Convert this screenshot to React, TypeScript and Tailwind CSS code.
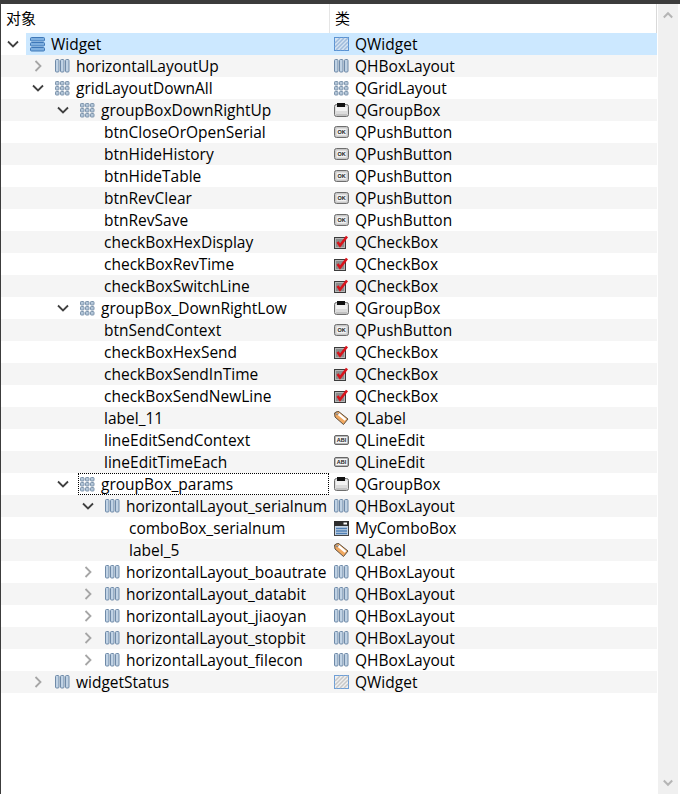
import { ReactNode } from "react";

type IconName = "vbox" | "widget" | "hbox" | "grid" | "group" | "push" | "check" | "label" | "line" | "combo" | "widgetGray";

type Row = {
  name: string;
  cls: string;
  clsIcon: IconName;
  depth: number;
  icon?: IconName;
  open?: boolean;
  focus?: boolean;
  selected?: boolean;
};

const rows: Row[] = [
  { name: "Widget", cls: "QWidget", clsIcon: "widget", depth: 0, icon: "vbox", open: true, selected: true },
  { name: "horizontalLayoutUp", cls: "QHBoxLayout", clsIcon: "hbox", depth: 1, icon: "hbox", open: false },
  { name: "gridLayoutDownAll", cls: "QGridLayout", clsIcon: "grid", depth: 1, icon: "grid", open: true },
  { name: "groupBoxDownRightUp", cls: "QGroupBox", clsIcon: "group", depth: 2, icon: "grid", open: true },
  { name: "btnCloseOrOpenSerial", cls: "QPushButton", clsIcon: "push", depth: 3 },
  { name: "btnHideHistory", cls: "QPushButton", clsIcon: "push", depth: 3 },
  { name: "btnHideTable", cls: "QPushButton", clsIcon: "push", depth: 3 },
  { name: "btnRevClear", cls: "QPushButton", clsIcon: "push", depth: 3 },
  { name: "btnRevSave", cls: "QPushButton", clsIcon: "push", depth: 3 },
  { name: "checkBoxHexDisplay", cls: "QCheckBox", clsIcon: "check", depth: 3 },
  { name: "checkBoxRevTime", cls: "QCheckBox", clsIcon: "check", depth: 3 },
  { name: "checkBoxSwitchLine", cls: "QCheckBox", clsIcon: "check", depth: 3 },
  { name: "groupBox_DownRightLow", cls: "QGroupBox", clsIcon: "group", depth: 2, icon: "grid", open: true },
  { name: "btnSendContext", cls: "QPushButton", clsIcon: "push", depth: 3 },
  { name: "checkBoxHexSend", cls: "QCheckBox", clsIcon: "check", depth: 3 },
  { name: "checkBoxSendInTime", cls: "QCheckBox", clsIcon: "check", depth: 3 },
  { name: "checkBoxSendNewLine", cls: "QCheckBox", clsIcon: "check", depth: 3 },
  { name: "label_11", cls: "QLabel", clsIcon: "label", depth: 3 },
  { name: "lineEditSendContext", cls: "QLineEdit", clsIcon: "line", depth: 3 },
  { name: "lineEditTimeEach", cls: "QLineEdit", clsIcon: "line", depth: 3 },
  { name: "groupBox_params", cls: "QGroupBox", clsIcon: "group", depth: 2, icon: "grid", open: true, focus: true },
  { name: "horizontalLayout_serialnum", cls: "QHBoxLayout", clsIcon: "hbox", depth: 3, icon: "hbox", open: true },
  { name: "comboBox_serialnum", cls: "MyComboBox", clsIcon: "combo", depth: 4 },
  { name: "label_5", cls: "QLabel", clsIcon: "label", depth: 4 },
  { name: "horizontalLayout_boautrate", cls: "QHBoxLayout", clsIcon: "hbox", depth: 3, icon: "hbox", open: false },
  { name: "horizontalLayout_databit", cls: "QHBoxLayout", clsIcon: "hbox", depth: 3, icon: "hbox", open: false },
  { name: "horizontalLayout_jiaoyan", cls: "QHBoxLayout", clsIcon: "hbox", depth: 3, icon: "hbox", open: false },
  { name: "horizontalLayout_stopbit", cls: "QHBoxLayout", clsIcon: "hbox", depth: 3, icon: "hbox", open: false },
  { name: "horizontalLayout_filecon", cls: "QHBoxLayout", clsIcon: "hbox", depth: 3, icon: "hbox", open: false },
  { name: "widgetStatus", cls: "QWidget", clsIcon: "widgetGray", depth: 1, icon: "hbox", open: false },
];

// one spacer per tree level, 25px a step
const indent = ["w-0", "w-[25px]", "w-[50px]", "w-[75px]", "w-[100px]"];

function Svg({ children }: { children: ReactNode }) {
  return (
    <svg width="16" height="16" viewBox="0 0 16 16" className="mt-[2px] shrink-0">
      {children}
    </svg>
  );
}

function HatchedBox({ edge, stripe, fill }: { edge: string; stripe: string; fill: string }) {
  return (
    <Svg>
      <rect x="0.5" y="0.5" width="14" height="13" fill={fill} stroke={edge} />
      <path d="M1 6 6 1M1 10l9-9M2 13 14 1M6 13l8-8M10 13l4-4" stroke={stripe} strokeWidth="1.5" />
    </Svg>
  );
}

function WidgetIcon({ name }: { name: IconName }) {
  switch (name) {
    case "vbox":
      return (
        <Svg>
          {[0, 5, 10].map((y) => (
            <g key={y}>
              <rect x="0.5" y={y + 0.5} width="14" height="3.5" rx="1" fill="#7fb0e0" stroke="#3f78b8" />
            </g>
          ))}
        </Svg>
      );
    case "widget":
      return <HatchedBox edge="#5b93d3" stripe="#9fbbdc" fill="#d5e3f2" />;
    case "widgetGray":
      return <HatchedBox edge="#6f9fd6" stripe="#c8c8c8" fill="#f0f0f0" />;
    case "hbox":
      return (
        <Svg>
          {[0, 5, 10].map((x) => (
            <g key={x}>
              <rect x={x + 0.5} y="0.5" width="3.5" height="12.5" rx="1" fill="#c0d2e4" stroke="#6f8aa8" />
            </g>
          ))}
        </Svg>
      );
    case "grid":
      return (
        <Svg>
          {[0, 5, 10].map((x) =>
            [0, 5, 10].map((y) => (
              <rect key={`${x}-${y}`} x={x + 0.5} y={y + 0.5} width="3.5" height="3.5" rx="0.8" fill="#b4c6d8" stroke="#7d94ac" />
            ))
          )}
        </Svg>
      );
    case "group":
      return (
        <Svg>
          <rect x="0.5" y="1.5" width="14" height="12" rx="2" fill="#dcdcdc" stroke="#6e6e6e" />
          <rect x="2" y="4" width="11" height="4" fill="#f2f2f2" />
          <rect x="3" y="0" width="8" height="4" fill="#111" />
          <path d="M2 12h11" stroke="#a8a8a8" />
        </Svg>
      );
    case "push":
      return (
        <Svg>
          <rect x="0.5" y="1.5" width="14" height="11" rx="2" fill="#c8c8c8" stroke="#6e6e6e" />
          <rect x="2.5" y="3.5" width="10" height="7" fill="#f2f2f2" />
          <text x="7.5" y="9" textAnchor="middle" fontSize="5.5" fontWeight="700" fontFamily="Liberation Sans, sans-serif" fill="#222">
            OK
          </text>
        </Svg>
      );
    case "check":
      return (
        <Svg>
          <rect x="0.5" y="2.5" width="11" height="11" fill="#b8b8b8" stroke="#3c3c3c" />
          <rect x="2" y="4" width="8" height="8" fill="#8c8c8c" />
          <path d="M3.5 7 6 10.5 13 1.500" fill="none" stroke="#d8141c" strokeWidth="2.6" />
        </Svg>
      );
    case "label":
      return (
        <Svg>
          <path d="M0.5 2 4 0l10 8-4.500 5.500L1 6z" fill="#f0a860" stroke="#5e5040" />
          <path d="M4.5 3 11.5 8.800" stroke="#fff" strokeWidth="2.4" />
          <circle cx="3" cy="2.800" r="1" fill="#fff" stroke="#444" strokeWidth="0.6" />
        </Svg>
      );
    case "line":
      return (
        <Svg>
          <rect x="0.5" y="2.5" width="14" height="9" rx="1.5" fill="#b8b8b8" stroke="#666" />
          <rect x="2" y="4" width="11" height="6" fill="#f6f6f6" />
          <text x="7.5" y="9" textAnchor="middle" fontSize="5.5" fontWeight="700" fontFamily="Liberation Sans, sans-serif" fill="#222">
            ABI
          </text>
        </Svg>
      );
    case "combo":
      return (
        <Svg>
          <rect x="0.5" y="0.5" width="14" height="14" fill="#c4d4e6" stroke="#444" />
          <rect x="0" y="0" width="15" height="5" fill="#2e2e2e" />
          <rect x="9.5" y="1.500" width="3.5" height="2" fill="#fff" />
          <path d="M2 7.500h11M2 10h11M2 12.500h11" stroke="#4f7fb4" strokeWidth="1.5" />
        </Svg>
      );
  }
}

function Chevron({ open }: { open: boolean }) {
  return (
    <svg width="12" height="12" viewBox="0 0 12 12" className="shrink-0">
      <path
        d={open ? "M1 3.5 6 8.500l5-5" : "M3.500 1 8.500 6l-5 5"}
        fill="none"
        stroke={open ? "#404040" : "#a6a6a6"}
        strokeWidth="1.8"
      />
    </svg>
  );
}

function TreeRow({ row, striped }: { row: Row; striped: boolean }) {
  const hasChildren = row.open !== undefined;
  return (
    <div className={`flex h-[22px] items-center ${striped ? "bg-[#f5f5f5]" : "bg-white"}`}>
      <div className="flex h-full w-[328px] shrink-0 items-center">
        <div className={`h-full shrink-0 ${indent[row.depth]}`} />
        {hasChildren ? (
          <>
            <div className="flex w-[25px] shrink-0 justify-center pr-[2px]">
              <Chevron open={row.open as boolean} />
            </div>
            <div
              className={`flex h-full min-w-0 flex-1 items-center ${row.selected ? "bg-[#cce8ff]" : ""} ${
                row.focus ? "ml-[2px] border border-dotted border-black pl-[1px]" : "pl-[4px]"
              }`}
            >
              <WidgetIcon name={row.icon as IconName} />
              <span className="ml-[5px] whitespace-nowrap pt-[2px]">{row.name}</span>
            </div>
          </>
        ) : (
          <span className="ml-[28px] whitespace-nowrap pt-[2px]">{row.name}</span>
        )}
      </div>
      <div className={`flex h-full flex-1 items-center pl-[5px] ${row.selected ? "bg-[#cce8ff]" : ""}`}>
        <WidgetIcon name={row.clsIcon} />
        <span className="ml-[5px] whitespace-nowrap pt-[2px]">{row.cls}</span>
      </div>
    </div>
  );
}

export default function App() {
  return (
    <div className="flex h-[794px] w-[680px] flex-col overflow-hidden bg-white font-['Open_Sans','Noto_Sans_CJK_SC',sans-serif] text-[15.5px] text-black">
      <div className="h-1 shrink-0 bg-[#3c3c3c]" />
      <div className="flex min-h-0 flex-1">
        <div className="w-px shrink-0 bg-[#3c3c3c]" />
        <div className="w-[656px] shrink-0">
          <div className="flex h-[29px] border-r border-[#d9d9d9]">
            <div className="flex w-[329px] items-center border-r border-[#e5e5e5] pl-[5px] font-['Noto_Sans_CJK_SC',sans-serif] text-[15px]">
              对象
            </div>
            <div className="flex items-center pl-[5px] font-['Noto_Sans_CJK_SC',sans-serif] text-[15px]">类</div>
          </div>
          {rows.map((row, i) => (
            <TreeRow key={row.name} row={row} striped={i % 2 === 1} />
          ))}
        </div>
        <div className="ml-px flex w-5 shrink-0 flex-col items-center justify-between bg-[#f0f0f0] py-[7px]">
          <svg width="10" height="8" viewBox="0 0 10 8">
            <path d="M.8 6.500 5 2.200l4.200 4.300" fill="none" stroke="#b5b5b5" strokeWidth="2" />
          </svg>
          <svg width="10" height="8" viewBox="0 0 10 8">
            <path d="M.8 1.500 5 5.800l4.200-4.300" fill="none" stroke="#b5b5b5" strokeWidth="2" />
          </svg>
        </div>
      </div>
    </div>
  );
}
